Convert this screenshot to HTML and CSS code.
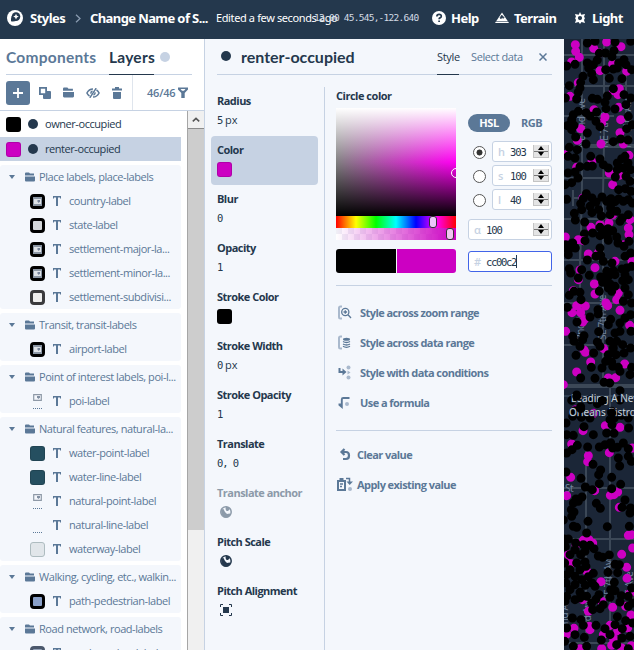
FILE: index.html
```html
<!DOCTYPE html>
<html lang="en">
<head>
<meta charset="utf-8">
<title>Styles</title>
<link rel="stylesheet" href="styles.css">
</head>
<body>
<svg class="defs" aria-hidden="true">
  <symbol id="folder" viewBox="0 0 10 10"><path d="M0 1.500Q0 .5 1 .5h3l1 1h4v2H0zM0 4.500h10V8.500q0 1-1 1H1q-1 0-1-1z"/></symbol>
  <symbol id="tee" viewBox="0 0 8 10"><path d="M0 0h8v2.600H7V1.500H5V10H3V1.500H1v1.100H0z"/></symbol>
  <symbol id="globe" viewBox="0 0 12 12"><circle cx="6" cy="6" r="5.200" fill="none" stroke="currentColor" stroke-width="1.500"/><path d="M1 3.500 3.500 3 5 6l2 2 2.500-.5 1.500 1L8 11.500H4L1.500 8zM6 .5 5.500 3l1 2L8 5l1.500-1.500V1.500z" fill="currentColor"/></symbol>
  <symbol id="pic" viewBox="0 0 9 9"><path d="M.7 1.700h7.600v5.600H.7z" fill="none" stroke="#8e99a7" stroke-width="1.200"/><path d="M4 3h3v1.500L5.500 6 4 4.500z" fill="#8391a3"/></symbol>
  <symbol id="picd" viewBox="0 0 9 9"><path d="M0 0h9v9H0z" fill="#8b96a4"/><path d="M1 2h7v5H1z" fill="#dfe3e8"/><path d="M4.500 3H7v1.500L5.700 6 4.500 4.500z" fill="#77849a"/></symbol>
</svg>
<header class="top">
  <svg class="logo" viewBox="0 0 16 16"><circle cx="8" cy="8" r="8" fill="#fff"/><circle cx="9" cy="6.600" r="4.300" fill="#24384d"/><path d="M4.700 6q-1 3-.7 5.300 3 .5 5.500-.5z" fill="#24384d"/><path d="m9 3.800.9 1.900 1.900.9-1.900.9L9 9.400l-.9-1.900-1.900-.9 1.900-.9z" fill="#fff"/></svg>
  <b class="t-styles">Styles</b>
  <svg class="chev" viewBox="0 0 6 9"><path d="m1 .7 4 3.800-4 3.800" fill="none" stroke="#8a9bb0" stroke-width="1.300"/></svg>
  <b class="t-name">Change Name of S...</b>
  <span class="edited">Edited a few seconds ago</span>
  <span class="coords">12.00 45.545,-122.640</span>
  <svg class="help" viewBox="0 0 14 14"><circle cx="7" cy="7" r="7" fill="#fff"/><path d="M4.900 5.400q0-2 2.200-2t2.200 1.800q0 1.200-1.300 1.700-.9.400-.9 1.400M7.100 9.500v1.600" fill="none" stroke="#24384d" stroke-width="1.700"/></svg>
  <b class="t-help">Help</b>
  <svg class="mount" viewBox="0 0 14 12"><path d="M7 .5 14 11H0z" fill="#fff"/><path d="m6.700 3-1.800 3 1.200.8 1-1.200 1.200.8.800-.8zM1 9.500h12" fill="#24384d" stroke="#24384d" stroke-width=".6"/></svg>
  <b class="t-terrain">Terrain</b>
  <svg class="sun" viewBox="0 0 12 12"><path fill-rule="evenodd" fill="#fff" d="m6 0 1.300 2.700L11 2l-1 3 1 1-1 2 1 3-3.500-1L6 12l-1.500-2L1 11l1-3-1-2 1-1-1-3 3.700.7zM6 4a2.100 2.100 0 1 0 0 4.200A2.100 2.100 0 0 0 6 4z"/></svg>
  <b class="t-light">Light</b>
</header>
<main class="work">
  <aside class="layers">
    <nav class="tabs"><span class="comp">Components</span><span class="lay">Layers</span><i class="status"></i></nav>
    <div class="tools">
      <span class="plus"><svg viewBox="0 0 10 10"><path d="M5 0v10M0 5h10" stroke="#fff" stroke-width="1.800"/></svg></span>
      <svg class="ic12" viewBox="0 0 12 12"><path d="M.9.900h6.200v6.200H.9z" fill="none" stroke="#5b7897" stroke-width="1.800"/><path d="M5 4h6q1 0 1 1v6q0 1-1 1H5q-1 0-1-1V7.500h3.500V4z"/></svg>
      <svg class="ic10"><use href="#folder"/></svg>
      <svg class="eye" viewBox="0 0 14 10"><path d="M7 1Q3 1 .9 5q1 2 2.600 3M7 9q4 0 6.100-4-1-2-2.600-3M3.800 9.800 10.200.2M5 5.600Q4.600 3.600 6.500 3M9 4.400Q9.400 6.400 7.500 7" fill="none" stroke="#5b7897" stroke-width="1.500"/></svg>
      <svg class="trash" viewBox="0 0 10 12"><path d="M0 1.500h3V0h4v1.500h3V3.500H0zM1 5h8v6q0 1-1 1H2q-1 0-1-1z"/></svg>
      <span class="count">46/46</span>
      <svg class="funnel" viewBox="0 0 10 11"><path fill-rule="evenodd" d="M0 .5h10v2L6.700 6v5H3.300V6L0 2.500zM2.500 2 4 3.800h2L7.500 2z"/></svg>
    </div>
    <div class="body">
      <div class="list">
        <div class="layer"><i class="sw black"></i><i class="dot"></i><span>owner-occupied</span></div>
        <div class="layer on"><i class="sw pink"></i><i class="dot"></i><span>renter-occupied</span></div>
        <section class="group">
          <h3><i class="tri"></i><svg><use href="#folder"/></svg><span>Place labels, place-labels</span></h3>
          <div class="row"><i class="sw ring"><svg><use href="#picd"/></svg></i><svg class="tee"><use href="#tee"/></svg><span>country-label</span></div>
          <div class="row"><i class="sw ring"></i><svg class="tee"><use href="#tee"/></svg><span>state-label</span></div>
          <div class="row"><i class="sw ring"><svg><use href="#picd"/></svg></i><svg class="tee"><use href="#tee"/></svg><span>settlement-major-la...</span></div>
          <div class="row"><i class="sw ring"><svg><use href="#picd"/></svg></i><svg class="tee"><use href="#tee"/></svg><span>settlement-minor-la...</span></div>
          <div class="row"><i class="sw ring gray"></i><svg class="tee"><use href="#tee"/></svg><span>settlement-subdivisi...</span></div>
        </section>
        <section class="group">
          <h3><i class="tri"></i><svg><use href="#folder"/></svg><span>Transit, transit-labels</span></h3>
          <div class="row"><i class="sw ring"><svg><use href="#picd"/></svg></i><svg class="tee"><use href="#tee"/></svg><span>airport-label</span></div>
        </section>
        <section class="group">
          <h3><i class="tri"></i><svg><use href="#folder"/></svg><span>Point of interest labels, poi-l...</span></h3>
          <div class="row"><i class="sw none"><svg><use href="#pic"/></svg></i><svg class="tee"><use href="#tee"/></svg><span>poi-label</span></div>
        </section>
        <section class="group">
          <h3><i class="tri"></i><svg><use href="#folder"/></svg><span>Natural features, natural-la...</span></h3>
          <div class="row"><i class="sw water"></i><svg class="tee"><use href="#tee"/></svg><span>water-point-label</span></div>
          <div class="row"><i class="sw water"></i><svg class="tee"><use href="#tee"/></svg><span>water-line-label</span></div>
          <div class="row"><i class="sw none"><svg><use href="#pic"/></svg></i><svg class="tee"><use href="#tee"/></svg><span>natural-point-label</span></div>
          <div class="row"><i class="sw none"></i><svg class="tee"><use href="#tee"/></svg><span>natural-line-label</span></div>
          <div class="row"><i class="sw pale"></i><svg class="tee"><use href="#tee"/></svg><span>waterway-label</span></div>
        </section>
        <section class="group">
          <h3><i class="tri"></i><svg><use href="#folder"/></svg><span>Walking, cycling, etc., walkin...</span></h3>
          <div class="row"><i class="sw ring blue"></i><svg class="tee"><use href="#tee"/></svg><span>path-pedestrian-label</span></div>
        </section>
        <section class="group">
          <h3><i class="tri"></i><svg><use href="#folder"/></svg><span>Road network, road-labels</span></h3>
          <div class="row"><i class="sw ring slate"></i><svg class="tee"><use href="#tee"/></svg><span>road-number-label</span></div>
        </section>
      </div>
      <div class="bar"><div class="up"><svg viewBox="0 0 8 5"><path d="m.8 4.300 3.200-3 3.200 3" fill="none" stroke="#555" stroke-width="1.600"/></svg></div><div class="thumb"></div></div>
    </div>
  </aside>
  <section class="panel">
    <div class="phead"><i class="pdot"></i><h1>renter-occupied</h1><span class="ptab on">Style</span><span class="ptab sel-data">Select data</span><svg class="x" viewBox="0 0 8 8"><path d="m.5.500 7 7m0-7-7 7" stroke="#5b7897" stroke-width="1.500"/></svg></div>
    <div class="cols">
      <div class="props">
        <div class="prop"><b>Radius</b><em><code>5</code> px</em></div>
        <div class="prop on"><b>Color</b><i class="sw pink"></i></div>
        <div class="prop"><b>Blur</b><em><code>0</code></em></div>
        <div class="prop"><b>Opacity</b><em><code>1</code></em></div>
        <div class="prop"><b>Stroke Color</b><i class="sw black"></i></div>
        <div class="prop"><b>Stroke Width</b><em><code>0</code> px</em></div>
        <div class="prop"><b>Stroke Opacity</b><em><code>1</code></em></div>
        <div class="prop"><b>Translate</b><em><code>0, 0</code></em></div>
        <div class="prop off"><b>Translate anchor</b><svg><use href="#globe"/></svg></div>
        <div class="prop"><b>Pitch Scale</b><svg><use href="#globe"/></svg></div>
        <div class="prop"><b>Pitch Alignment</b><svg viewBox="0 0 12 12"><path d="M3 3h6v6H3z"/><path d="M.5 3V.5H3M9 .5h2.500V3M11.500 9v2.500H9M3 11.500H.5V9" fill="none" stroke="#24384d"/></svg></div>
      </div>
      <div class="editor">
        <h2>Circle color</h2>
        <div class="picker">
          <div class="visual">
            <div class="field"><i class="ringmark"></i></div>
            <div class="hue"><i class="knob k1"></i></div>
            <div class="alpha"><i class="knob k2"></i></div>
            <div class="pair"><i></i><i></i></div>
          </div>
          <div class="nums">
            <div class="modes"><b class="hsl">HSL</b><b class="rgb">RGB</b></div>
            <div class="num"><i class="radio sel"></i><label><u>h</u><code>303</code><i class="spin"></i></label></div>
            <div class="num"><i class="radio"></i><label><u>s</u><code>100</code><i class="spin"></i></label></div>
            <div class="num"><i class="radio"></i><label><u>l</u><code>40</code><i class="spin"></i></label></div>
            <label class="wide"><u>α</u><code>100</code><i class="spin"></i></label>
            <label class="wide hex"><u>#</u><code>cc00c2</code><i class="caret"></i></label>
          </div>
        </div>
        <div class="links">
          <a><svg viewBox="0 0 16 16"><path d="M5 1.500H3.500Q2 1.500 2 3v9q0 1.500 1.500 1.500H5" class="lt"/><circle cx="8.300" cy="7" r="3.600" class="dk"/><path d="m11 9.700 3 3.300M6.500 7h3.600M8.300 5.200v3.600" class="dk"/></svg><span>Style across zoom range</span></a>
          <a><svg viewBox="0 0 16 16"><path d="M5 1.500H3.500Q2 1.500 2 3v9q0 1.500 1.500 1.500H5" class="lt"/><ellipse cx="9.500" cy="4.300" rx="3.500" ry="1.500"/><path d="M6 6.500q3.500 2 7 0M6 9q3.500 2 7 0M6 11.300q3.500 2 7 0" class="dk"/></svg><span>Style across data range</span></a>
          <a><svg viewBox="0 0 16 16"><path d="M2.500 3v4h4" fill="none" stroke="#5b7897" stroke-width="2"/><path d="m5.500 3.500 4 3.500-4 3.500z"/><g class="lf"><circle cx="11.500" cy="2.500" r="2"/><path d="m10.500 5.500 3 2-3 2z"/><circle cx="11.500" cy="12.500" r="2"/></g></svg><span>Style with data conditions</span></a>
          <a><svg viewBox="0 0 16 16"><path d="M1.500 9.500h3.300V4.500q0-1.500 1.500-1.500h6.200M4.800 9v3L2 9.500" fill="none" stroke="#5b7897" stroke-width="1.900"/><circle cx="10" cy="9" r="2" class="lf"/></svg><span>Use a formula</span></a>
        </div>
        <div class="links more">
          <a><svg viewBox="0 0 16 16"><path d="M7.500 2 4.500 5l3 3M5 5h4q3 0 3 3.500T9 12H6" fill="none" stroke="#5b7897" stroke-width="2.200"/></svg><span>Clear value</span></a>
          <a><svg viewBox="0 0 16 16"><path fill-rule="evenodd" d="M0 3h2.500V1h4v2H9v11H0zm2 2v7h5V5z"/><path d="M3 7h3M3 9.500h2M9 1.500h3.500V5" fill="none" stroke="#5b7897" stroke-width="1.500"/><path d="M9.500 4.500H16L12.700 8z"/><circle cx="13" cy="12" r="2" class="lf"/></svg><span>Apply existing value</span></a>
        </div>
      </div>
    </div>
  </section>
  <svg class="map" viewBox="564 39 70 611">
    <rect x="564" y="39" width="70" height="611" fill="#1b2637"/>
    <g fill="none" stroke="#3c4857" stroke-width="2">
      <path d="M582 39v146l-2 86v50M604 39v105l-1 50v190M626 60v60M564 55h70M564 86h70M564 116h50M564 178h70M573 190v16m0-8h12M564 219h70M580 238v60M564 260h70M564 303h70M564 345h70M610 388v260M586 450v200M564 488h70M564 539h70M564 643h70"/>
      <path d="M590 146h44M564 386h70" stroke-width="4"/>
      <path d="M564 396h70" stroke="#46586c" stroke-width="1"/>
    </g>
    <g class="street"><text transform="translate(585 148) rotate(-90)">NE 2nd Ave</text><text transform="translate(608 148) rotate(-90)">NE 7th Ave</text><text transform="translate(631 148) rotate(-90)">NE 11th Ave</text><text transform="translate(584 340) rotate(-90)">2nd Ave</text><text transform="translate(606 340) rotate(-90)">SE 7th Ave</text><text x="565" y="492">St</text><text transform="translate(612 600) rotate(-90)">SE 7th Ave</text><text transform="translate(568 642) rotate(-90)">SE 2nd Ave</text><text transform="translate(633 600) rotate(-90)">SE Ave</text><text transform="translate(591 630) rotate(-90)">3rd Ave</text></g>
    <g class="pk" transform="translate(560 38) scale(.33333)"><path d="M46 20h0M47 40h0M58 58h0M101 31h0M140 12h0M183 26h0M120 98h0M158 78h0M200 100h0M160 158h0M178 152h0M174 170h0M102 215h0M135 237h0M125 255h0M176 208h0M182 245h0M62 272h0M52 307h0M123 318h0M180 284h0M190 318h0M30 175h0M55 134h0M14 350h0M50 388h0M96 370h0M148 405h0M158 440h0M178 412h0M207 352h0M158 530h0M205 570h0M207 590h0M210 545h0M93 568h0M147 555h0M120 560h0M16 597h0M69 480h0M118 45h0M35 72h0"/></g>
    <g class="bk" transform="translate(560 38) scale(.33333)"><path d="M82 15h0M105 10h0M165 12h0M212 10h0M118 46h0M136 45h0M162 38h0M156 56h0M45 79h0M20 84h0M82 75h0M100 80h0M112 66h0M69 115h0M62 133h0M60 150h0M55 162h0M86 90h0M95 107h0M100 125h0M137 95h0M160 93h0M148 121h0M186 122h0M192 65h0M176 75h0M172 90h0M198 80h0M215 95h0M28 143h0M50 183h0M16 180h0M160 152h0M142 174h0M97 181h0M112 184h0M135 193h0M138 212h0M165 213h0M192 170h0M213 180h0M198 200h0M205 235h0M110 222h0M78 224h0M90 234h0M40 230h0M55 220h0M35 245h0M42 262h0M35 275h0M108 250h0M120 266h0M22 263h0M82 285h0M47 297h0M78 318h0M160 311h0M182 303h0M204 306h0M28 328h0M52 335h0M217 260h0M200 272h0M24 355h0M45 360h0M92 355h0M120 363h0M130 380h0M145 390h0M60 386h0M82 385h0M97 384h0M24 405h0M45 402h0M54 420h0M35 434h0M15 440h0M172 375h0M185 362h0M195 355h0M204 375h0M172 395h0M190 390h0M212 395h0M166 417h0M198 415h0M210 430h0M176 455h0M196 452h0M213 460h0M79 467h0M70 482h0M20 484h0M96 480h0M108 492h0M62 497h0M90 505h0M126 477h0M140 490h0M153 482h0M165 491h0M176 483h0M190 490h0M205 485h0M217 495h0M43 526h0M65 515h0M46 546h0M74 552h0M96 524h0M116 515h0M124 534h0M152 510h0M150 530h0M170 520h0M187 540h0M205 530h0M120 568h0M144 572h0M158 578h0M130 583h0M98 585h0M120 593h0M142 595h0M73 588h0M180 550h0M170 597h0"/></g>
    <g class="pk" transform="translate(560 238) scale(.33333)"><path d="M55 5h0M70 8h0M85 48h0M115 45h0M165 70h0M105 89h0M60 96h0M55 125h0M103 138h0M105 168h0M175 165h0M170 185h0M180 217h0M50 203h0M76 204h0M36 224h0M62 224h0M73 245h0M68 252h0M138 195h0M143 203h0M209 262h0M17 280h0M131 332h0M76 343h0M92 372h0M50 402h0M145 420h0M167 419h0M10 440h0M40 158h0M216 70h0M194 378h0M47 515h0M101 526h0M136 563h0M180 568h0M69 578h0M192 20h0M72 336h0"/></g>
    <g class="bk" transform="translate(560 238) scale(.33333)"><path d="M17 20h0M38 15h0M25 38h0M46 30h0M75 8h0M120 30h0M145 7h0M174 15h0M192 25h0M207 10h0M25 50h0M82 66h0M122 52h0M130 70h0M108 55h0M195 55h0M212 45h0M215 85h0M156 75h0M28 92h0M32 105h0M65 95h0M88 112h0M55 120h0M140 100h0M160 98h0M186 93h0M200 90h0M122 117h0M145 115h0M165 110h0M195 110h0M205 125h0M128 133h0M150 138h0M188 128h0M145 150h0M155 160h0M118 160h0M60 163h0M42 160h0M28 172h0M63 185h0M195 150h0M205 170h0M215 195h0M190 190h0M165 145h0M22 208h0M114 215h0M115 228h0M90 237h0M51 252h0M152 244h0M145 260h0M180 255h0M195 240h0M212 230h0M116 281h0M165 285h0M180 280h0M213 280h0M38 295h0M72 293h0M42 310h0M68 305h0M60 325h0M112 312h0M120 325h0M150 310h0M170 310h0M188 320h0M160 330h0M48 352h0M101 345h0M145 350h0M168 350h0M192 345h0M212 330h0M62 420h0M94 388h0M137 370h0M158 385h0M175 388h0M126 390h0M215 388h0M210 410h0M105 421h0M132 433h0M149 435h0M180 400h0M155 372h0"/></g>
    <g class="pk" transform="translate(560 438) scale(.33333)"><path d="M35 18h0M85 53h0M83 71h0M148 44h0M32 118h0M104 158h0M20 173h0M151 172h0M162 170h0M173 162h0M178 208h0M205 292h0M214 290h0M70 307h0M87 305h0M98 315h0M48 320h0M23 374h0M34 377h0M185 349h0M200 388h0M201 421h0M218 330h0M123 431h0M82 402h0M158 508h0M125 490h0M197 505h0M213 531h0M209 467h0M85 520h0M68 485h0M42 571h0M88 565h0M90 575h0M150 562h0M173 578h0M160 600h0M130 590h0M20 588h0M155 622h0M125 632h0M60 632h0M185 630h0M214 623h0M217 30h0M203 570h0M25 350h0"/></g>
    <g class="bk" transform="translate(560 438) scale(.33333)"><path d="M52 22h0M36 35h0M20 45h0M83 27h0M118 27h0M135 20h0M152 14h0M172 28h0M190 15h0M205 32h0M205 55h0M175 60h0M158 30h0M18 102h0M99 79h0M122 96h0M116 110h0M118 137h0M179 84h0M214 70h0M63 121h0M155 118h0M76 147h0M97 155h0M155 152h0M182 139h0M66 177h0M48 183h0M40 195h0M55 190h0M34 215h0M42 222h0M35 235h0M109 196h0M121 211h0M195 186h0M186 208h0M212 210h0M210 225h0M10 246h0M84 250h0M40 265h0M50 268h0M142 266h0M80 285h0M208 265h0M12 303h0M25 303h0M47 315h0M70 320h0M90 322h0M102 332h0M16 326h0M45 335h0M75 340h0M30 350h0M62 350h0M115 354h0M128 358h0M148 351h0M14 375h0M50 375h0M75 372h0M30 395h0M60 395h0M78 385h0M165 379h0M178 380h0M144 403h0M173 404h0M100 406h0M20 410h0M45 415h0M85 416h0M65 425h0M96 435h0M18 435h0M163 433h0M45 440h0M76 442h0M30 455h0M60 463h0M105 445h0M117 470h0M150 478h0M184 473h0M215 450h0M205 475h0M165 458h0M20 475h0M45 485h0M80 475h0M108 484h0M15 490h0M60 480h0M95 495h0M130 500h0M180 492h0M218 495h0M98 515h0M120 512h0M205 505h0M37 540h0M63 545h0M172 536h0M197 548h0M218 555h0M20 570h0M70 562h0M108 562h0M165 560h0M187 572h0M135 572h0M73 598h0M124 606h0M150 590h0M186 600h0M210 595h0M45 590h0M14 610h0M170 620h0M80 625h0M40 625h0M205 632h0M152 455h0"/></g>
    <g class="bk" transform="translate(560 238) scale(.33333)"><path d="M180 458h0M50 471h0M35 487h0M90 485h0M127 488h0M180 486h0M62 506h0M112 497h0M45 518h0M155 520h0M163 540h0M150 545h0M184 532h0M38 535h0M64 538h0M90 540h0M205 540h0M18 555h0M72 566h0M156 560h0M206 570h0M140 585h0M162 586h0M100 590h0M20 590h0M40 592h0"/></g>
    <g class="place"><text x="571" y="402">Leading A New</text><text x="569" y="416">Orleans Bistro</text></g>
    <g class="bk" transform="translate(560 238) scale(.33333)"><path d="M50 475h0M127 488h0M62 512h0M155 525h0"/></g>
  </svg>
</main>
</body>
</html>
```
FILE: styles.css
```css
* { box-sizing: border-box; }
body { margin: 0; width: 634px; height: 650px; overflow: hidden; font: 12px/16px "Open Sans", "Noto Sans", sans-serif; letter-spacing: -.4px; color: #24384d; background: #fff; }
svg { display: block; flex: none; fill: #5b7897; }
span, b, h1, h2 { white-space: nowrap; }
i, em, u { font-style: normal; text-decoration: none; }
code { font: 10.500px/14px "DejaVu Sans Mono", monospace; letter-spacing: -1.100px; }
.defs { position: absolute; width: 0; height: 0; }
.top { height: 39px; background: #24384d; color: #fff; display: flex; align-items: center; padding: 0 0 3px 7px; font: 13px/16px "Noto Sans", sans-serif; letter-spacing: -.5px; overflow: hidden; }
.top > * { flex: none; }
.logo { width: 16px; height: 16px; }
.t-styles { margin-left: 7px; width: 45px; }
.chev { width: 6px; height: 9px; }
.t-name { margin-left: 9px; width: 126px; letter-spacing: -.6px; }
.edited { width: 98px; font-size: 11px; letter-spacing: -.38px; }
.coords { width: 105px; font: 9.500px/14px "DejaVu Sans Mono", monospace; letter-spacing: -.75px; color: #d3dbe5; }
.help { width: 14px; height: 14px; margin-left: 13px; }
.t-help { margin-left: 5px; width: 44px; }
.mount { width: 14px; height: 12px; }
.t-terrain { margin-left: 5px; width: 60px; }
.sun { width: 12px; height: 12px; }
.t-light { margin-left: 6px; }
.work { display: flex; height: 611px; }
.layers { width: 205px; border-right: 1px solid #c6d2e3; display: flex; flex-direction: column; }
.tabs { height: 36px; margin: 0 12px 0 6px; border-bottom: 1px solid #c6d2e3; display: flex; font: 700 15.500px/36px Lato, sans-serif; letter-spacing: .25px; flex: none; }
.comp { width: 103px; color: #5b7897; font-weight: 700; }
.lay { width: 45px; height: 36px; border-bottom: 1px solid #24384d; }
.status { width: 10px; height: 10px; border-radius: 5px; background: #c6d2e3; margin: 13px 0 0 6px; }
.tools { height: 36px; flex: none; display: flex; align-items: center; padding-left: 6px; border-bottom: 1px solid #c6d2e3; }
.plus { width: 24px; height: 24px; border-radius: 3px; background: #5b7897; display: flex; align-items: center; justify-content: center; }
.plus svg { width: 10px; height: 10px; }
.ic12 { width: 12px; height: 12px; margin-left: 9px; }
.ic10 { width: 11px; height: 11px; margin-left: 12px; }
.eye { width: 14px; height: 10px; margin-left: 12px; }
.trash { width: 10px; height: 12px; margin: 0 10px 0 12px; }
.count { height: 35px; border-left: 1px solid #dfe5ed; padding-left: 14px; width: 46px; line-height: 36px; font-size: 11px; font-weight: 600; letter-spacing: -.2px; color: #5b7897; }
.funnel { width: 10px; height: 11px; }
.body { flex: 1; min-height: 0; display: flex; justify-content: space-between; }
.list { width: 181px; padding-top: 1px; overflow: hidden; color: #5b7897; font-size: 11px; letter-spacing: -.44px; }
.layer { height: 24px; margin-bottom: 1px; display: flex; align-items: center; padding-left: 6px; color: #24384d; }
.layer.on { background: #c6d2e3; margin-bottom: 4px; }
.layer .dot { width: 10px; height: 10px; border-radius: 5px; background: #24384d; margin: 0 7px; }
.sw { display: block; width: 15px; height: 15px; border-radius: 3px; flex: none; border: 1px solid #0002; }
.black { background: #000; }
.pink { background: #cc00c2; }
.ring { border: 3px solid #000; background: #d3d6d9; border-radius: 4px; }
.ring svg { width: 9px; height: 9px; }
.gray { border-color: #3a3a3d; background: #eee; }
.blue { background: #8aa0c8; }
.slate { border-color: #4b586c; background: #94a2b8; }
.water { background: #254f60; }
.pale { background: #e1e6ea; border-color: #aebcc0; }
.none { border: 0; padding: 0 3px; height: 16px; display: flex; flex-direction: column; }
.none svg { width: 9px; height: 9px; }
.none::after { content: ""; margin-top: auto; height: 1px; width: 9px; background: repeating-linear-gradient(90deg, #5b7897 0 1px, transparent 1px 2px); }
.group { background: #f4f7fc; border-radius: 3px; margin-bottom: 4px; }
.group h3 { margin: 0; font-size: 11px; font-weight: 400; height: 24px; display: flex; align-items: center; padding-left: 9px; }
.tri { border: 3px solid transparent; border-top: 4px solid #5b7897; border-bottom: 0; margin-right: 10px; }
.group h3 svg { width: 10px; height: 10px; margin-right: 4px; }
.row { height: 24px; display: flex; align-items: center; padding-left: 30px; }
.tee { width: 8px; height: 10px; margin: 0 8px; }
.bar { width: 17px; background: #f0f0f0; border-left: 1px solid #a6a6a6; }
.up { height: 18px; border-bottom: 1px solid #8b8b8b; display: flex; align-items: center; justify-content: center; }
.up svg { width: 8px; height: 5px; }
.thumb { height: 401px; background: #cdcdcd; }
.panel { width: 359px; background: #f4f7fc; display: flex; flex-direction: column; }
.phead { height: 36px; margin: 0 12px; border-bottom: 1px solid #c6d2e3; display: flex; flex: none; line-height: 36px; }
.pdot { width: 10px; height: 10px; border-radius: 5px; background: #24384d; margin: 12px 10px 0 4px; }
h1 { margin: 0; width: 196px; font: 700 16px/36px Lato, sans-serif; letter-spacing: 0; }
.ptab { height: 36px; font-size: 11px; }
.ptab.on { width: 22px; margin-right: 12px; border-bottom: 1px solid #24384d; letter-spacing: -.3px; }
.sel-data { width: 68px; color: #5b7897; }
.x { width: 8px; height: 8px; margin-top: 14px; }
.cols { flex: 1; display: flex; }
.props { width: 120px; margin-top: 12px; padding: 0 6px; border-right: 1px solid #c6d2e3; }
.prop { height: 49px; width: 107px; padding: 6px; border-radius: 4px; font-size: 11px; letter-spacing: -.52px; }
.prop.on { background: #c6d2e3; }
.prop b, .prop em { display: block; }
.prop em { margin-top: 3px; letter-spacing: 0; }
.prop .sw { margin-top: 4px; }
.prop svg { width: 12px; height: 12px; margin: 5px 0 0 3px; fill: #24384d; }
.off { color: #8c9aa9; }
.editor { width: 216px; margin: 12px 0 0 11px; }
h2 { margin: 0; font-size: 11px; line-height: 18px; height: 21px; letter-spacing: -.48px; }
.picker { display: flex; gap: 12px; height: 178px; border-bottom: 1px solid #c6d2e3; }
.visual { width: 120px; }
.field { position: relative; overflow: hidden; height: 108px; background: linear-gradient(to bottom, #fff, #fff0 50%, #0000 50%, #000), linear-gradient(to right, #808080, #ff00f2); }
.ringmark { position: absolute; left: 115px; top: 60px; width: 10px; height: 10px; border: 1px solid #fff; border-radius: 5px; }
.hue { height: 12px; background: linear-gradient(to right, red, #ff0, #0f0, #0ff, #00f, #f0f, red); }
.alpha { height: 12px; background: linear-gradient(to right, #cc00c200, #cc00c2), repeating-conic-gradient(#fff 0 25%, #f0f0f6 0 50%) 0 0 / 12px 12px; }
.knob { display: block; width: 8px; height: 12px; border: 1px solid #333; border-radius: 3px; background: #f3c4f2; }
.k1 { margin-left: 93px; background: #ebc5fb; float: left; }
.k2 { margin-left: 110px; float: left; }
.pair { display: flex; gap: 1px; margin-top: 9px; height: 24px; border-radius: 3px; overflow: hidden; }
.pair i { width: 60px; background: #000; }
.pair i + i { flex: 1; background: #cc00c2; }
.nums { width: 84px; padding-top: 6px; }
.modes { display: flex; height: 18px; line-height: 18px; margin-bottom: 9px; font-size: 11px; color: #5b7897; letter-spacing: -.45px; }
.hsl { width: 42px; border-radius: 9px; background: #5b7897; color: #fff; text-align: center; }
.rgb { margin-left: 11px; }
.num { display: flex; height: 21px; margin-bottom: 3px; padding-left: 5px; align-items: center; }
.radio { width: 13px; height: 13px; border: 1px solid #555; border-radius: 7px; background: #fff; margin: 2px 6px 0 0; }
.sel { background: radial-gradient(circle, #333 0 2.700px, #fff 3.300px); }
label { width: 60px; height: 21px; background: #fff; border: 1px solid #c6d2e3; border-radius: 3px; display: flex; align-items: center; padding: 0 2px 0 5px; }
label u { width: 12px; color: #c6d2e3; font-size: 11px; font-weight: 600; }
.wide { width: 84px; margin-top: 9px; }
.hex { margin-top: 11px; border-color: #4264e8; }
.hex code { letter-spacing: -1.300px; }
.spin { margin-left: auto; width: 16px; height: 13px; background: linear-gradient(#777, #777) 0 6px / 16px 1px no-repeat, #e4e4e4; border: 1px solid #c4c4c4; border-top: 0; display: flex; flex-direction: column; align-items: center; justify-content: space-between; padding: 1px 0; }
.spin::before, .spin::after { content: ""; border: 3px solid transparent; border-top: 0; border-bottom: 4px solid #000; }
.spin::after { border-top: 4px solid #000; border-bottom: 0; }
.caret { width: 1px; height: 13px; background: #24384d; margin-left: 0; }
.links { padding-top: 12px; height: 145px; border-bottom: 1px solid #c6d2e3; }
.links a { display: flex; height: 30px; align-items: center; color: #5b7897; font-size: 11px; font-weight: 700; letter-spacing: -.56px; }
.links svg { width: 16px; height: 16px; margin-right: 7px; margin-left: 1px; }
.more { padding-top: 9px; border: 0; }
.more svg { margin-right: 4px; }
.lt { fill: none; stroke: #a9b9cd; stroke-width: 2; }
.dk { fill: none; stroke: #5b7897; stroke-width: 1.300; }
.lf { fill: #a9b9cd; }
.map { width: 70px; height: 611px; }
.pk, .bk { fill: none; stroke: #cc00c2; stroke-width: 27; stroke-linecap: round; }
.bk { stroke: #000; }
.street { fill: #71839b; font: 10px "Noto Sans", sans-serif; }
.place { fill: #c3cfda; stroke: #1b2637; stroke-width: 1px; paint-order: stroke; font: 10px "Noto Sans", sans-serif; letter-spacing: 0; }
```
